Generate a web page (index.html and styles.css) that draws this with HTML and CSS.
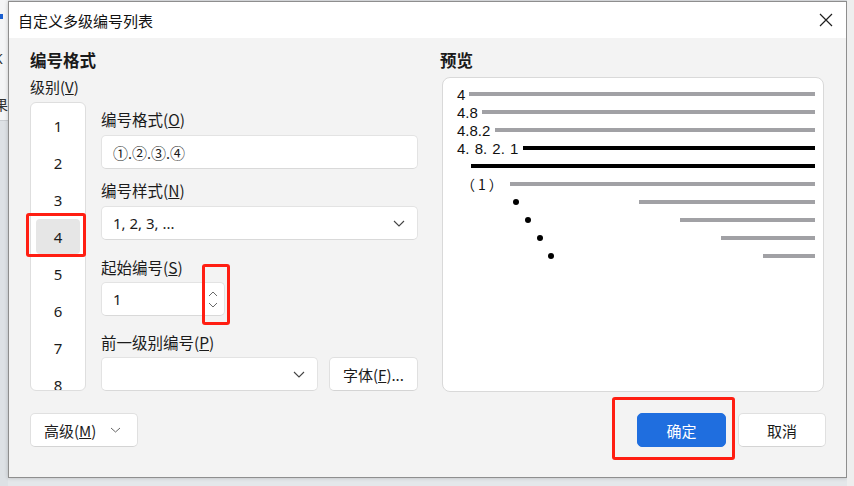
FILE: index.html
```html
<!DOCTYPE html>
<html lang="zh">
<head>
<meta charset="utf-8">
<title>自定义多级编号列表</title>
<link rel="stylesheet" href="styles.css">
</head>
<body>
<div class="screen">
  <div class="left-edge">
    <div class="le-top"><span class="le-blue"></span><span class="le-char c1">K</span><span class="le-char c2">果</span></div>
    <div class="le-bottom"></div>
  </div>
  <div class="dialog">
    <div class="titlebar">
      <span class="title">自定义多级编号列表</span>
      <svg class="close" width="14" height="14" viewBox="0 0 14 14"><path d="M1 1L13 13M13 1L1 13" stroke="#1f1f1f" stroke-width="1.2" fill="none"/></svg>
    </div>
    <div class="body">
      <div class="main">
        <section class="format">
          <h2 class="heading">编号格式</h2>
          <div class="level-label">级别(<u>V</u>)</div>
          <div class="level-row">
            <ul class="levels">
              <li>1</li><li>2</li><li>3</li><li class="selected">4</li><li>5</li><li>6</li><li>7</li><li>8</li>
            </ul>
            <div class="fields">
              <div class="field-label fl1">编号格式(<u>O</u>)</div>
              <div class="input">①.②.③.④</div>
              <div class="field-label fl2">编号样式(<u>N</u>)</div>
              <div class="input select"><span>1, 2, 3, ...</span>
                <svg class="chev" width="12" height="7" viewBox="0 0 12 7"><path d="M1 1L6 6L11 1" stroke="#444" stroke-width="1.1" fill="none"/></svg>
              </div>
              <div class="field-label fl3">起始编号(<u>S</u>)</div>
              <div class="input spin"><span>1</span>
                <span class="spin-arrows">
                  <svg width="10" height="6" viewBox="0 0 10 6"><path d="M1 5L5 1L9 5" stroke="#6a6a6a" stroke-width="1" fill="none"/></svg>
                  <svg width="10" height="6" viewBox="0 0 10 6"><path d="M1 1L5 5L9 1" stroke="#6a6a6a" stroke-width="1" fill="none"/></svg>
                </span>
              </div>
              <div class="field-label fl4">前一级别编号(<u>P</u>)</div>
              <div class="prev-row">
                <div class="input select prev-select">
                  <svg class="chev" width="12" height="7" viewBox="0 0 12 7"><path d="M1 1L6 6L11 1" stroke="#444" stroke-width="1.1" fill="none"/></svg>
                </div>
                <button class="btn font-btn"><span>字体(<u>F</u>)...</span></button>
              </div>
            </div>
          </div>
        </section>
        <section class="preview">
          <h2 class="heading">预览</h2>
          <div class="preview-box">
            <div class="prow"><span class="plabel w1">4</span><span class="pline"></span></div>
            <div class="prow"><span class="plabel w2">4.8</span><span class="pline"></span></div>
            <div class="prow"><span class="plabel w3">4.8.2</span><span class="pline"></span></div>
            <div class="prow"><span class="plabel w4 wide">4. 8. 2. 1</span><span class="pline dark"></span></div>
            <div class="prow"><span class="plabel w5"></span><span class="pline dark"></span></div>
            <div class="prow"><span class="plabel w6 paren">（1）</span><span class="pline"></span></div>
            <div class="prow"><span class="plabel w7"><i class="dot"></i></span><span class="pline"></span></div>
            <div class="prow"><span class="plabel w8"><i class="dot"></i></span><span class="pline"></span></div>
            <div class="prow"><span class="plabel w9"><i class="dot"></i></span><span class="pline"></span></div>
            <div class="prow"><span class="plabel w10"><i class="dot"></i></span><span class="pline"></span></div>
          </div>
        </section>
      </div>
      <div class="footer">
        <button class="btn adv-btn"><span class="adv-text">高级(<u>M</u>)</span>
          <svg width="11" height="6" viewBox="0 0 11 6"><path d="M1 1L5.5 5L10 1" stroke="#666" stroke-width="1" fill="none"/></svg>
        </button>
        <div class="spacer"></div>
        <button class="btn primary">确定</button>
        <button class="btn cancel">取消</button>
      </div>
      <div class="mark m1"></div>
      <div class="mark m2"></div>
      <div class="mark m3"></div>
    </div>
  </div>
  <div class="right-edge"></div>
</div>
</body>
</html>
```
FILE: styles.css
```css
* { box-sizing: border-box; }
html, body { margin: 0; padding: 0; }
body {
  width: 854px;
  height: 486px;
  overflow: hidden;
  background: #e4e7ea;
  font-family: "Noto Sans", "Noto Sans CJK SC", sans-serif;
  color: #1b1b1b;
}
.screen {
  display: flex;
  height: 486px;
}
.left-edge {
  width: 8px;
  display: flex;
  flex-direction: column;
  overflow: hidden;
}
.le-top {
  height: 121px;
  background: #f4f5f6;
  border-bottom: 1px solid #c9cdd1;
  display: flex;
  flex-direction: column;
  font-size: 14px;
  color: #333;
}
.le-blue { display: block; width: 3px; height: 5px; margin-top: 14px; background: #1a5fd0; }
.le-char { display: block; margin-left: -6px; line-height: 16px; }
.le-char.c1 { margin-top: 32px; }
.le-char.c2 { margin-top: 30px; }
.le-bottom { flex: 1; background: #dde1e5; }
.right-edge {
  width: 7px;
  background: #eeeeee;
}
.dialog {
  width: 839px;
  margin-top: 1px;
  height: 477px;
  border: 1px solid #8e8e8e;
  background: #f3f3f3;
  display: flex;
  flex-direction: column;
  box-shadow: 0 0 4px rgba(0,0,0,0.2);
}
.titlebar {
  height: 36px;
  background: #ffffff;
  display: flex;
  align-items: center;
  justify-content: space-between;
  padding: 0 13px 0 9px;
}
.title {
  font-family: "Noto Sans CJK SC", sans-serif;
  font-size: 15px;
  color: #111;
}
.close { display: block; }
.body {
  position: relative;
  flex: 1;
}
.main {
  display: flex;
  gap: 22px;
  padding: 11px 22px 0 21px;
}
.heading {
  margin: 0;
  font-family: "Noto Sans CJK SC", sans-serif;
  font-size: 16.5px;
  font-weight: 700;
  line-height: 22px;
  color: #1a1a1a;
}
.format { width: 388px; }
.level-label {
  margin-top: 6px;
  font-size: 15px;
  line-height: 20px;
  font-family: "Noto Sans CJK SC", sans-serif;
}
.level-row {
  display: flex;
  gap: 15px;
  margin-top: 5px;
}
.levels {
  list-style: none;
  margin: 0;
  padding: 4px 0 0;
  width: 56px;
  height: 289px;
  overflow: hidden;
  background: #fff;
  border: 1px solid #dedede;
  border-radius: 6px;
  display: flex;
  flex-direction: column;
}
.levels li {
  flex: none;
  height: 35px;
  margin: 1px 5px;
  display: flex;
  align-items: center;
  justify-content: center;
  font-size: 15px;
  border-radius: 4px;
}
.levels li.selected { background: #e6e6e6; }
.fields {
  width: 317px;
  padding-top: 7px;
  display: flex;
  flex-direction: column;
}
.field-label {
  font-family: "Noto Sans CJK SC", sans-serif;
  font-size: 15.5px;
  line-height: 20px;
  margin-bottom: 6px;
  color: #1b1b1b;
}
.fl2 { margin-top: 11px; }
.fl3 { margin-top: 17px; margin-bottom: 5px; }
.fl4 { margin-top: 16px; margin-bottom: 5px; }
.input {
  height: 34px;
  background: #fff;
  border: 1px solid #e3e3e3;
  border-bottom-color: #d9d9d9;
  border-radius: 5px;
  display: flex;
  align-items: center;
  padding: 0 11px;
  font-size: 15px;
  position: relative;
}
.select { justify-content: space-between; }
.select .chev { margin-right: 1px; }
.spin { width: 124px; justify-content: space-between; padding-right: 6px; }
.spin-arrows {
  display: flex;
  flex-direction: column;
  gap: 5px;
}
.spin-arrows svg { display: block; }
.prev-row {
  display: flex;
  gap: 11px;
}
.prev-select { width: 217px; justify-content: flex-end; padding-right: 11px; }
.btn {
  height: 34px;
  background: #fff;
  border: 1px solid #e0e0e0;
  border-bottom-color: #d4d4d4;
  border-radius: 5px;
  font-family: "Noto Sans CJK SC", sans-serif;
  font-size: 15px;
  color: #1b1b1b;
  padding: 0;
  display: flex;
  align-items: center;
  justify-content: center;
  white-space: nowrap;
}
.font-btn { width: 89px; }
.preview { width: 384px; }
.preview-box {
  margin-top: 6px;
  margin-left: 2px;
  height: 315px;
  background: #fff;
  border: 1px solid #d9d9d9;
  border-radius: 8px;
  padding: 7px 8px 0 14px;
}
.prow {
  height: 18px;
  display: flex;
  align-items: center;
}
.plabel {
  flex: none;
  font-family: "Liberation Sans", sans-serif;
  font-size: 15px;
  line-height: 15px;
  white-space: nowrap;
  color: #111;
  display: flex;
  align-items: center;
}
.w1 { width: 12px; }
.w2 { width: 25px; }
.w3 { width: 38px; }
.w4 { width: 66px; }
.w5 { width: 14px; }
.w6 { width: 53px; padding-left: 4px; }
.w7 { width: 182px; padding-left: 56px; }
.w8 { width: 223px; padding-left: 68px; }
.w9 { width: 264px; padding-left: 80px; }
.w10 { width: 306px; padding-left: 91px; }
.wide {
  word-spacing: 1px;
}
.paren {
  font-family: "Noto Sans CJK SC", sans-serif;
  font-size: 14px;
  letter-spacing: 3px;
}
.dot {
  display: block;
  width: 6px;
  height: 6px;
  border-radius: 50%;
  background: #000;
}
.pline {
  flex: 1;
  height: 4px;
  background: #a1a1a5;
}
.pline.dark { background: #000; }
.footer {
  display: flex;
  align-items: center;
  gap: 12px;
  margin-top: 21px;
  padding: 0 20px 0 21px;
}
.adv-btn {
  width: 108px;
  justify-content: flex-start;
  padding-left: 13px;
  gap: 14px;
}
.adv-btn svg { display: block; }
.spacer { flex: 1; }
.primary {
  width: 89px;
  background: #1f6edf;
  border-color: #1f6edf;
  color: #fff;
}
.cancel { width: 88px; }
.mark {
  position: absolute;
  border: 3px solid #ff1e12;
  border-radius: 3px;
}
.m1 { left: 17px; top: 175px; width: 60px; height: 44px; }
.m2 { left: 193px; top: 226px; width: 28px; height: 61px; }
.m3 { left: 603px; top: 359px; width: 123px; height: 63px; }
```
